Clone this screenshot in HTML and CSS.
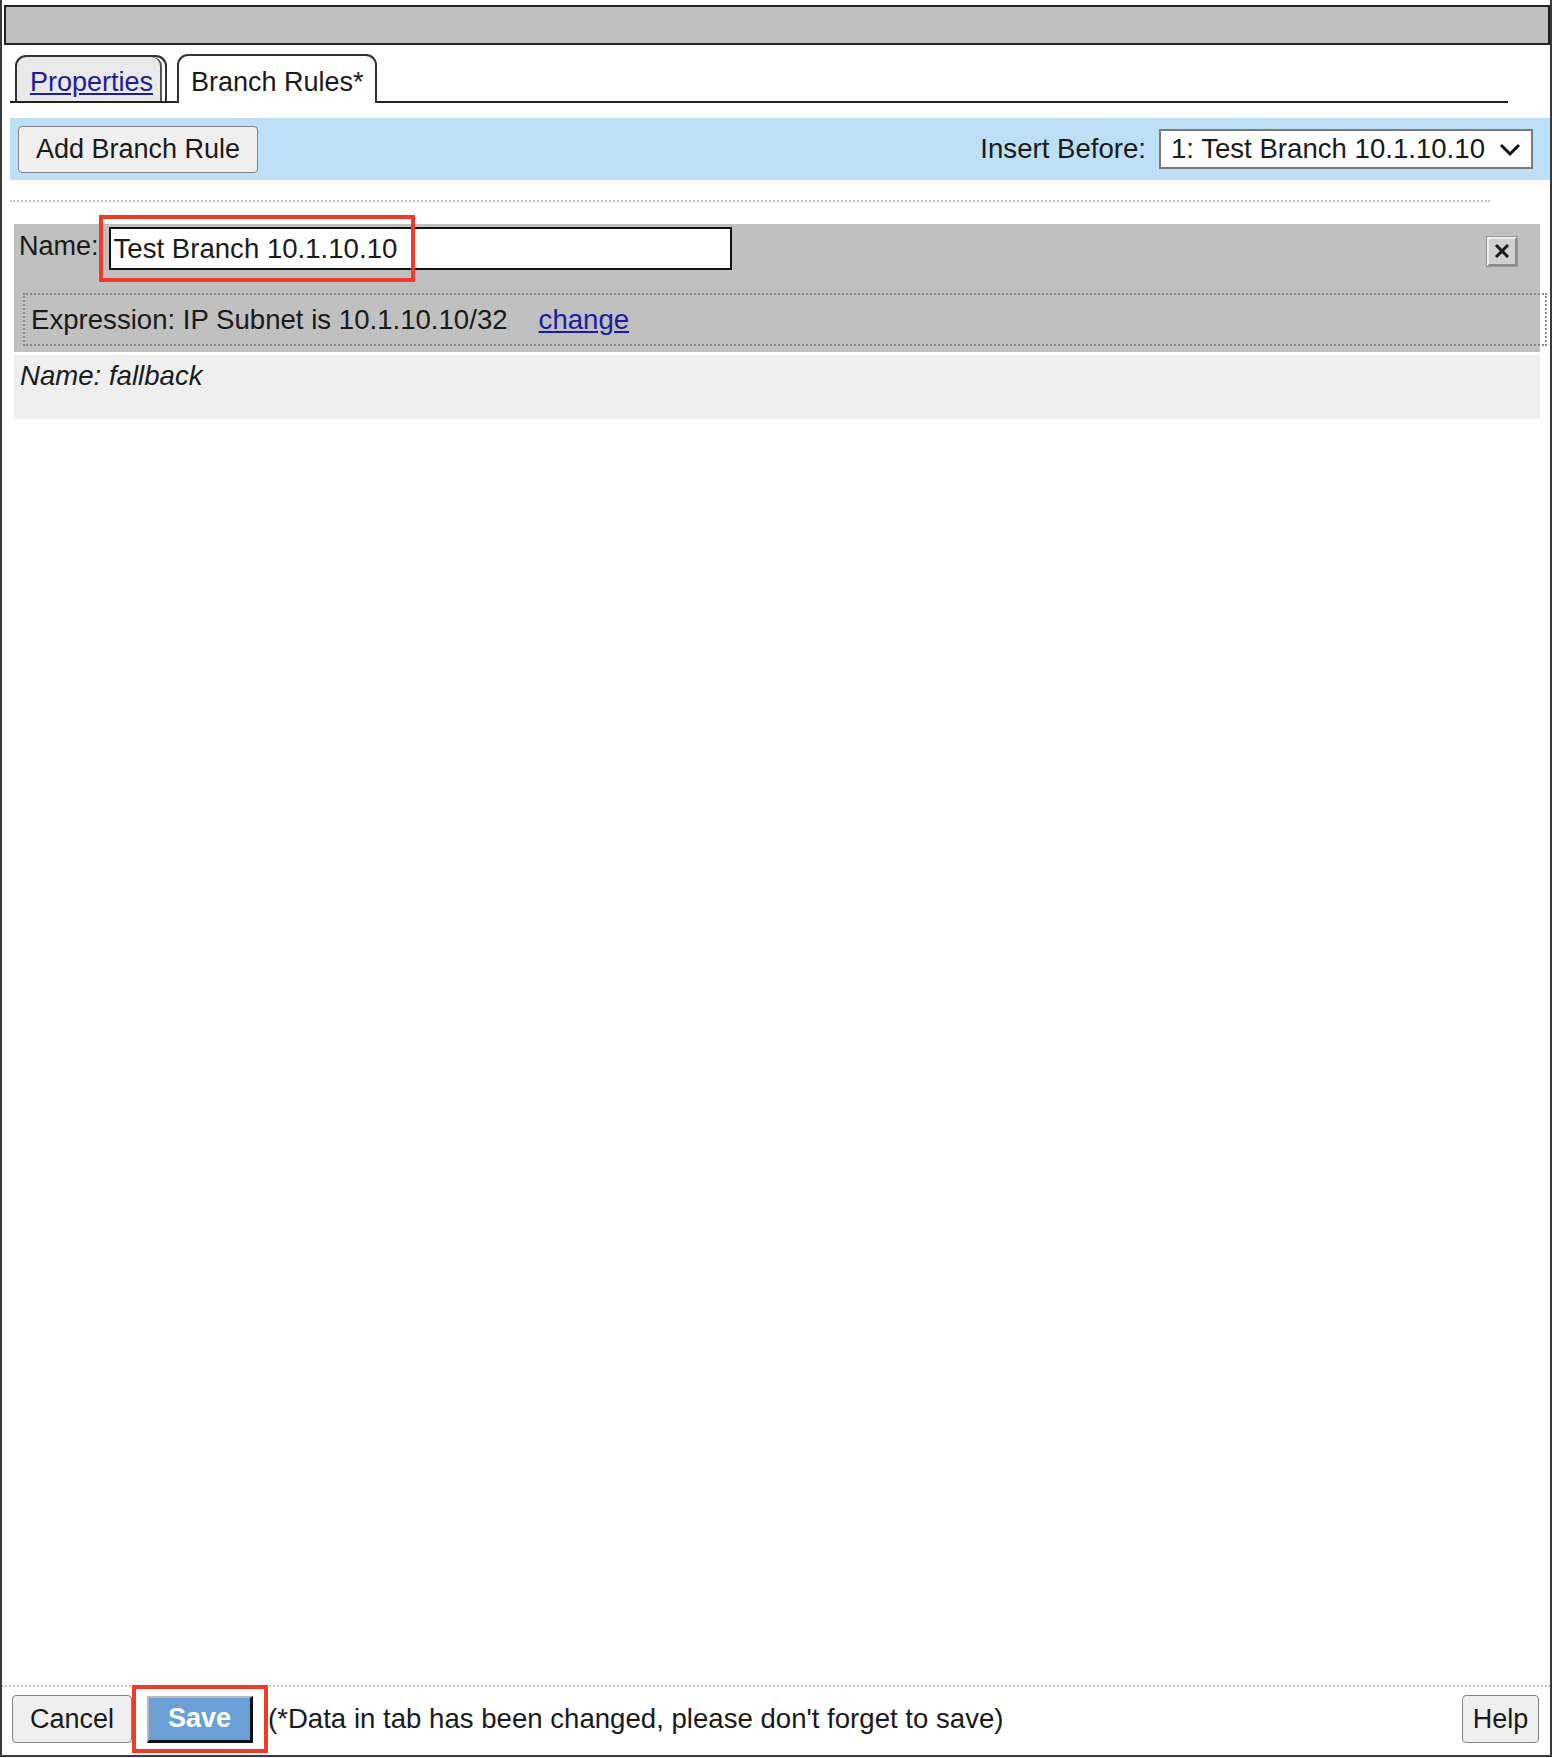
FILE: index.html
```html
<!DOCTYPE html>
<html>
<head>
<meta charset="utf-8">
<link rel="stylesheet" href="styles.css">
</head>
<body>
<div class="frame">
  <div class="titlebar"></div>
  <div class="tabs">
    <div class="tab inactive"><a href="#" class="link">Properties</a></div>
    <div class="tab active">Branch Rules*</div>
  </div>
  <div class="toolbar">
    <button class="btn add-btn">Add Branch Rule</button>
    <div class="insert">
      <span class="insert-label">Insert Before:</span>
      <div class="select">
        <span>1: Test Branch 10.1.10.10</span>
        <svg class="chev" width="22" height="14" viewBox="0 0 22 14"><polyline points="2,2 11,11 20,2" fill="none" stroke="#111" stroke-width="3"/></svg>
      </div>
    </div>
  </div>
  <div class="sep"></div>
  <div class="rule">
    <div class="name-row">
      <span class="label">Name:</span>
      <div class="input-wrap">
        <div class="input">Test Branch 10.1.10.10</div>
        <div class="highlight name-hl"></div>
      </div>
      <div class="close-btn">
        <svg width="26" height="25" viewBox="0 0 26 25"><line x1="7" y1="6" x2="19" y2="18" stroke="#1a1a1a" stroke-width="3"/><line x1="19" y1="6" x2="7" y2="18" stroke="#1a1a1a" stroke-width="3"/></svg>
      </div>
    </div>
    <div class="expr">Expression: IP Subnet is 10.1.10.10/32<a href="#" class="link change">change</a></div>
  </div>
  <div class="fallback">Name: fallback</div>
  <div class="spacer"></div>
  <div class="footer">
    <button class="btn cancel-btn">Cancel</button>
    <div class="save-wrap">
      <button class="save-btn">Save</button>
      <div class="highlight save-hl"></div>
    </div>
    <span class="note">(*Data in tab has been changed, please don't forget to save)</span>
    <button class="btn help-btn">Help</button>
  </div>
</div>
</body>
</html>
```
FILE: styles.css
```css
* { box-sizing: border-box; }
html, body { margin: 0; padding: 0; background: #fff; }
body {
  font-family: "Liberation Sans", Arial, sans-serif;
  font-size: 27.6px;
  color: #1a1a1a;
}
.frame {
  width: 1552px;
  height: 1757px;
  border-left: 2px solid #3a3a3a;
  border-right: 2px solid #3a3a3a;
  border-bottom: 2px solid #3a3a3a;
  display: flex;
  flex-direction: column;
}
.titlebar {
  margin: 5px 0 0 2px;
  height: 40px;
  background: #c0c0c0;
  border: 2px solid #222;
  flex: none;
}
.tabs {
  margin: 9px 0 0 8px;
  width: 1498px;
  padding-left: 5px;
  border-bottom: 2px solid #222;
  display: flex;
  align-items: flex-end;
  gap: 10px;
  height: 49px;
  flex: none;
}
.tab {
  border: 2px solid #333;
  border-bottom: none;
  border-radius: 11px 11px 0 0;
  line-height: 36px;
  white-space: nowrap;
  padding-top: 7px;
  font-size: 27px;
}
.tab.inactive {
  height: 46px;
  width: 152px;
  padding-left: 13px;
  background: #e9e9e9;
  box-shadow: inset -3px 0 0 #fff, inset -5px 0 0 #555;
}
.tab.active {
  height: 49px;
  width: 200px;
  padding-left: 12px;
  background: #fff;
  margin-bottom: -2px;
  padding-top: 8px;
}
.link { color: #1c1ca0; text-decoration: underline; }
.toolbar {
  margin: 15px 0 0 8px;
  height: 62px;
  background: #bee0f6;
  display: flex;
  align-items: center;
  justify-content: space-between;
  padding: 0 17px 0 8px;
  flex: none;
}
.btn {
  font-family: "Liberation Sans", Arial, sans-serif;
  font-size: 27px;
  color: #1a1a1a;
  background: #efefef;
  border: 1px solid #858585;
  border-radius: 4px;
  padding: 0;
  height: 47px;
}
.add-btn { width: 240px; }
.insert { display: flex; align-items: center; }
.insert-label { margin-right: 13px; }
.select {
  width: 374px;
  height: 40px;
  border: 2px solid #7a7a7a;
  background: #fff;
  display: flex;
  align-items: center;
  justify-content: space-between;
  padding: 0 10px 0 10px;
  white-space: nowrap;
}
.chev { margin-top: 1px; flex: none; }
.sep {
  margin: 20px 0 0 8px;
  width: 1480px;
  border-top: 2px dotted #c4c4c4;
  flex: none;
}
.rule {
  margin: 22px 0 0 12px;
  width: 1526px;
  background: #c0c0c0;
  padding: 3px 0 6px 0;
  flex: none;
}
.name-row {
  display: flex;
  align-items: center;
  padding: 0 23px 0 5px;
}
.label { margin-right: 10px; margin-top: -4px; font-size: 27px; }
.input-wrap { position: relative; }
.input {
  width: 623px;
  height: 43px;
  border: 2px solid #111;
  background: #fff;
  padding: 0 0 0 3px;
  line-height: 39px;
  white-space: nowrap;
}
.highlight {
  position: absolute;
  border: 4px solid #f23a2a;
  pointer-events: none;
}
.name-hl { left: -10px; top: -12px; width: 316px; height: 67px; }
.close-btn {
  margin-left: auto;
  margin-top: 6px;
  width: 30px;
  height: 29px;
  background: #d0d0d0;
  border-top: 2px solid #ececec;
  border-left: 2px solid #ececec;
  border-right: 2px solid #8a8a8a;
  border-bottom: 2px solid #8a8a8a;
  box-shadow: 0 0 0 1px #9a9a9a;
  display: flex;
  align-items: center;
  justify-content: center;
  overflow: hidden;
}
.close-btn svg { flex: none; }
.expr {
  margin: 23px -7px 0 9px;
  height: 53px;
  border: 2px dotted #8a8a8a;
  padding: 9px 0 0 6px;
  line-height: 31px;
  white-space: nowrap;
}
.change { margin-left: 31px; }
.fallback {
  margin: 3px 0 0 12px;
  width: 1526px;
  height: 64px;
  background: #efefef;
  font-style: italic;
  padding: 5px 0 0 6px;
  line-height: 31px;
  flex: none;
}
.spacer { flex: 1; }
.footer {
  border-top: 2px dotted #c4c4c4;
  display: flex;
  align-items: center;
  padding: 8px 11px 12px 10px;
  flex: none;
}
.cancel-btn { width: 120px; height: 48px; }
.save-wrap { position: relative; margin-left: 15px; }
.save-btn {
  font-family: "Liberation Sans", Arial, sans-serif;
  font-size: 27px;
  font-weight: bold;
  color: #fff;
  background: #6a9fd8;
  width: 106px;
  height: 47px;
  padding: 0;
  border-top: 2px solid #b8b8b8;
  border-left: 2px solid #b8b8b8;
  border-right: 3px solid #111;
  border-bottom: 3px solid #111;
  display: block;
}
.save-hl { left: -15px; top: -11px; width: 136px; height: 68px; }
.note { margin-left: 15px; white-space: nowrap; }
.help-btn { margin-left: auto; width: 77px; height: 48px; }
```
